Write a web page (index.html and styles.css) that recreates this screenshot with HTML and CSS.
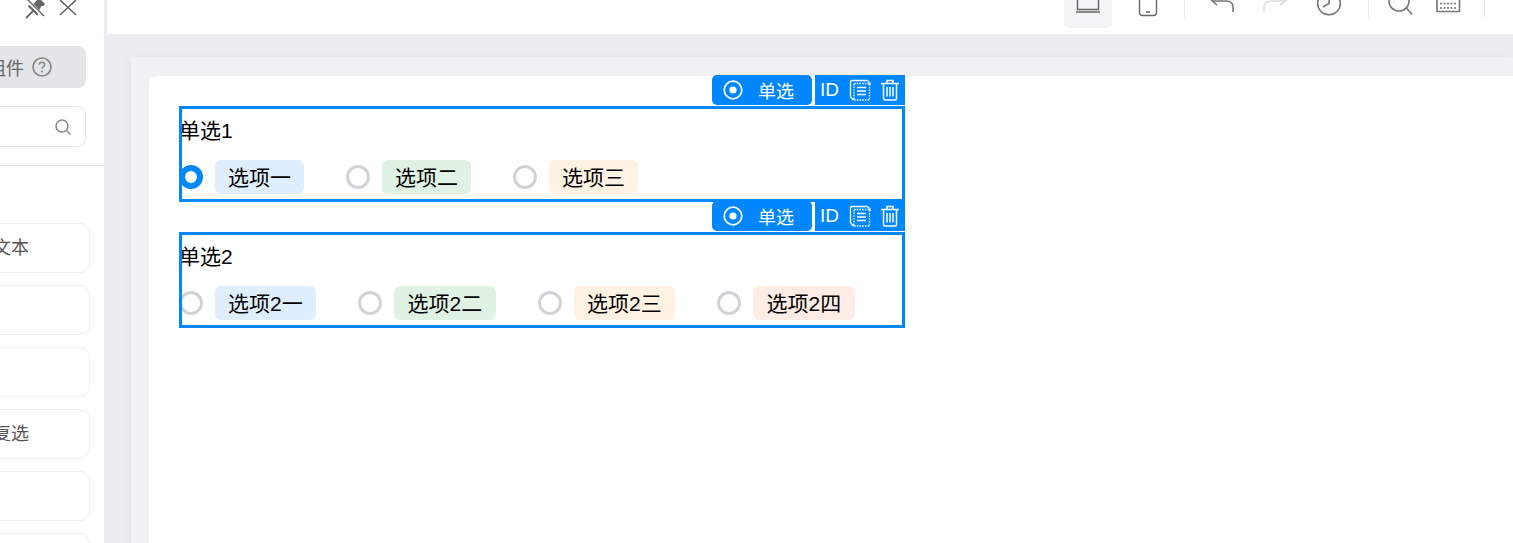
FILE: index.html
```html
<!DOCTYPE html>
<html lang="zh-CN">
<head>
    <meta charset="utf-8" />
    <title>表单设计</title>
    <link rel="stylesheet" href="styles.css">
</head>
<body>
    <div class="page">
        <div class="sidebar">
            <div class="side-head">
                <svg class="pin" width="22" height="21" viewBox="0 0 22 21"><path d="M13 2l3-1 5 5-1.500 2-2 0-3 5.500 0 3-1.500 1-9-9 1-1.500 3.500 0z" fill="#666"/><path d="M2 20l8-8" stroke="#666" stroke-width="1.800"/><path d="M2 1l18 18" stroke="#fff" stroke-width="3.500"/><path d="M3 1l17 17" stroke="#666" stroke-width="1.400"/></svg>
                <svg class="close" width="18" height="16" viewBox="0 0 18 16"><path d="M1 0l16 15M17 0L1 15" stroke="#666" stroke-width="1.600" fill="none"/></svg>
            </div>
            <div class="side-btn">
                <span>组件</span>
                <svg width="20" height="20" viewBox="0 0 20 20"><circle cx="10" cy="10" r="9" fill="none" stroke="#888" stroke-width="1.700"/><path d="M7.300 7.800c0-3.400 5.400-3.400 5.400 0 0 2-2.700 2-2.700 4" fill="none" stroke="#888" stroke-width="1.600"/><circle cx="10" cy="14.400" r="1" fill="#888"/></svg>
            </div>
            <div class="side-search">
                <svg width="18" height="18" viewBox="0 0 18 18"><circle cx="8" cy="8" r="6" fill="none" stroke="#888" stroke-width="1.500"/><path d="M12.500 12.500l4 4" stroke="#888" stroke-width="1.500"/></svg>
            </div>
            <div class="side-line"></div>
            <div class="side-item">文本</div>
            <div class="side-item"></div>
            <div class="side-item"></div>
            <div class="side-item">复选</div>
            <div class="side-item"></div>
            <div class="side-item"></div>
        </div>
        <div class="main">
            <div class="toolbar">
                <div class="tool active">
                    <svg width="28" height="28" viewBox="0 0 28 28"><path d="M3.500 0v9.500h21V0M2 12h24" fill="none" stroke="#666" stroke-width="1.400"/></svg>
                </div>
                <div class="tool next">
                    <svg width="28" height="28" viewBox="0 0 28 28"><path d="M5.500 0v12.500q0 3 3 3h11q3 0 3-3V0M12 12h4" fill="none" stroke="#666" stroke-width="1.400"/></svg>
                </div>
                <div class="divider"></div>
                <div class="tool undo">
                    <svg width="28" height="28" viewBox="0 0 28 28"><path d="M3 0l6 5M4 1h14q7 0 7 6v5" fill="none" stroke="#777" stroke-width="1.600"/></svg>
                </div>
                <div class="tool redo">
                    <svg width="28" height="28" viewBox="0 0 28 28"><path d="M26 0l-7 5M24 1H10q-7 0-7 6v5" fill="none" stroke="#ddd" stroke-width="1.600"/></svg>
                </div>
                <div class="tool clock">
                    <svg width="28" height="28" viewBox="0 0 28 28"><circle cx="14" cy="3.500" r="11.300" fill="none" stroke="#777" stroke-width="1.600"/><path d="M14 0v3.500L8 7" fill="none" stroke="#777" stroke-width="1.600"/></svg>
                </div>
                <div class="divider wide"></div>
                <div class="tool find">
                    <svg width="28" height="28" viewBox="0 0 28 28"><circle cx="13" cy="1" r="10" fill="none" stroke="#777" stroke-width="1.600"/><path d="M20.500 8l5.500 6.500" stroke="#777" stroke-width="1.600"/></svg>
                </div>
                <div class="tool">
                    <svg width="28" height="28" viewBox="0 0 28 28"><path d="M3 0v11.500h22.500V0" fill="none" stroke="#777" stroke-width="1.600"/><path d="M6 3.500h17M6 8h17" stroke="#777" stroke-width="1.500" stroke-dasharray="2 1.500"/></svg>
                </div>
                <div class="divider"></div>
            </div>
            <div class="canvas">
                <div class="sheet">
                    <div class="field">
                        <div class="field-tag">
                            <svg width="20" height="20" viewBox="0 0 20 20"><circle cx="10" cy="10" r="8.800" fill="none" stroke="#fff" stroke-width="1.700"/><circle cx="10" cy="10" r="3.600" fill="#fff"/></svg>
                            <span>单选</span>
                        </div>
                        <div class="field-actions">
                            <span>ID</span>
                            <svg width="22" height="22" viewBox="0 0 22 22"><path d="M1.500 18V3q0-1.500 1.500-1.500h15.500" fill="none" stroke="#fff" stroke-width="1.300"/><path d="M1.500 18l2.500 2.500h1M18.500 1.500L21 4v2" fill="none" stroke="#fff" stroke-width="1.300"/><path d="M5 4.500h15.500v16.500H5z" fill="none" stroke="#fff" stroke-width="1.300" stroke-dasharray="1.500 1.200"/><path d="M8 8.500h9M8 12h9M8 15.500h9" stroke="#fff" stroke-width="1.300"/></svg>
                            <svg width="20" height="22" viewBox="0 0 20 22"><path d="M1 4.500h18M7 4V1.500h6V4M3.500 5v14.500q0 1.500 1.500 1.500h10q1.500 0 1.500-1.500V5" fill="none" stroke="#fff" stroke-width="1.500"/><path d="M7 8v9.500M10 8v9.500M13 8v9.500" stroke="#fff" stroke-width="1.500"/></svg>
                        </div>
                        <div class="field-label">单选1</div>
                        <div class="options">
                            <div class="option"><span class="radio checked"></span><span class="pill blue">选项一</span></div>
                            <div class="option"><span class="radio"></span><span class="pill green">选项二</span></div>
                            <div class="option"><span class="radio"></span><span class="pill orange">选项三</span></div>
                        </div>
                    </div>
                    <div class="field">
                        <div class="field-tag">
                            <svg width="20" height="20" viewBox="0 0 20 20"><circle cx="10" cy="10" r="8.800" fill="none" stroke="#fff" stroke-width="1.700"/><circle cx="10" cy="10" r="3.600" fill="#fff"/></svg>
                            <span>单选</span>
                        </div>
                        <div class="field-actions">
                            <span>ID</span>
                            <svg width="22" height="22" viewBox="0 0 22 22"><path d="M1.500 18V3q0-1.500 1.500-1.500h15.500" fill="none" stroke="#fff" stroke-width="1.300"/><path d="M1.500 18l2.500 2.500h1M18.500 1.500L21 4v2" fill="none" stroke="#fff" stroke-width="1.300"/><path d="M5 4.500h15.500v16.500H5z" fill="none" stroke="#fff" stroke-width="1.300" stroke-dasharray="1.500 1.200"/><path d="M8 8.500h9M8 12h9M8 15.500h9" stroke="#fff" stroke-width="1.300"/></svg>
                            <svg width="20" height="22" viewBox="0 0 20 22"><path d="M1 4.500h18M7 4V1.500h6V4M3.500 5v14.500q0 1.500 1.500 1.500h10q1.500 0 1.500-1.500V5" fill="none" stroke="#fff" stroke-width="1.500"/><path d="M7 8v9.500M10 8v9.500M13 8v9.500" stroke="#fff" stroke-width="1.500"/></svg>
                        </div>
                        <div class="field-label">单选2</div>
                        <div class="options long">
                            <div class="option"><span class="radio"></span><span class="pill blue">选项2一</span></div>
                            <div class="option"><span class="radio"></span><span class="pill green">选项2二</span></div>
                            <div class="option"><span class="radio"></span><span class="pill orange">选项2三</span></div>
                            <div class="option"><span class="radio"></span><span class="pill red">选项2四</span></div>
                        </div>
                    </div>
                </div>
            </div>
        </div>
    </div>
</body>
</html>
```

FILE: styles.css
```css
* {
    box-sizing: border-box;
}

body {
    margin: 0;
    font-family: "Liberation Sans", "Noto Sans CJK SC", sans-serif;
    color: #000;
}

.page {
    display: flex;
    height: 543px;
    overflow: hidden;
    background-color: #ecedf1;
}

/* left panel, its content runs past the window edge */
.sidebar {
    flex: 0 0 104px;
    display: flex;
    flex-direction: column;
    align-items: flex-end;
    background-color: #fff;
    overflow: hidden;
}

.side-head {
    display: flex;
    flex: none;
    align-items: flex-start;
    gap: 13px;
    height: 48px;
    padding-right: 27px;
    margin-top: -2px;
}

.side-head .close {
    margin-top: 2px;
}

.side-btn {
    display: flex;
    align-items: center;
    justify-content: flex-end;
    gap: 8px;
    flex: 0 0 42px;
    width: 160px;
    margin-right: 18px;
    padding-right: 34px;
    border-radius: 8px;
    background-color: #e4e5e7;
    color: #666;
    font-size: 18px;
}

.side-search {
    display: flex;
    align-items: center;
    justify-content: flex-end;
    flex: 0 0 41px;
    width: 160px;
    margin: 18px 18px 0 0;
    padding-right: 13px;
    border: 1px solid #e8e9eb;
    border-radius: 8px;
}

.side-line {
    flex: 0 0 1px;
    width: 160px;
    margin: 18px 0 57px;
    background-color: #e8e9eb;
}

.side-item {
    flex: 0 0 50px;
    width: 160px;
    margin: 0 14px 12px 0;
    padding-right: 60px;
    border: 1px solid #eeeff1;
    border-radius: 10px;
    color: #555;
    font-size: 18px;
    line-height: 48px;
    text-align: right;
}

.main {
    flex: 1;
    min-width: 0;
}

.toolbar {
    display: flex;
    align-items: flex-start;
    height: 34px;
    margin-left: 3px;
    padding-left: 957px;
    background-color: #fff;
}

.tool {
    display: flex;
    justify-content: center;
    flex: 0 0 48px;
    height: 28px;
}

.tool.active {
    border-radius: 0 0 5px 5px;
    background-color: #f3f4f5;
}

.tool.next {
    margin-left: 12px;
}

.tool.undo {
    margin-left: 13px;
}

.tool.redo {
    margin-left: 5px;
}

.tool.clock {
    margin-left: 6px;
}

.tool.find {
    margin-left: 7px;
}

.divider {
    flex: 0 0 1px;
    height: 19px;
    margin-left: 12px;
    background-color: #ebebeb;
}

.divider.wide {
    margin-left: 15px;
}

.canvas {
    height: 600px;
    margin: 23px 0 0 27px;
    padding: 19px 0 0 18px;
    background-color: #f0f1f3;
    box-shadow: -3px 0 6px rgba(0, 0, 0, 0.03);
}

.sheet {
    height: 100%;
    padding: 30px 0 0 30px;
    border-radius: 8px 0 0 0;
    background-color: #fff;
}

.field {
    position: relative;
    width: 726px;
    height: 96px;
    margin-bottom: 30px;
}

/* selection frame sits on top of the radios */
.field::after {
    content: "";
    position: absolute;
    top: 0;
    right: 0;
    bottom: 0;
    left: 0;
    border: 3px solid #0086ff;
    pointer-events: none;
}

.field-tag {
    position: absolute;
    top: -31px;
    right: 93px;
    display: flex;
    align-items: center;
    width: 100px;
    height: 30px;
    padding-left: 11px;
    border-radius: 5px;
    background-color: #0086ff;
    color: #fff;
    font-size: 18px;
}

.field-tag span {
    margin-left: 15px;
}

.field-actions {
    position: absolute;
    top: -31px;
    right: 0;
    display: flex;
    align-items: center;
    width: 90px;
    height: 30px;
    padding-left: 5px;
    background-color: #0086ff;
    color: #fff;
    font-size: 19px;
}

.field-actions svg {
    margin-left: 10px;
}

.field-actions svg:last-child {
    margin-left: 9px;
}

.field-label {
    display: flex;
    align-items: center;
    height: 46px;
    margin-bottom: 8px;
    font-size: 21px;
}

.options {
    display: flex;
}

.option {
    display: flex;
    align-items: center;
    gap: 12px;
    margin-right: 42px;
}

.radio {
    width: 24px;
    height: 24px;
    border: 3px solid #d0d3d6;
    border-radius: 50%;
    background-color: #fff;
}

.radio.checked {
    border: 6.5px solid #0086ff;
}

.pill {
    height: 34px;
    padding: 0 13px;
    border-radius: 6px;
    font-size: 21px;
    line-height: 36px;
    white-space: nowrap;
}

.long .pill {
    padding-right: 13.8px;
}

.pill.blue {
    background-color: #e0effe;
}

.pill.green {
    background-color: #dff2e4;
}

.pill.orange {
    background-color: #fef2e3;
}

.pill.red {
    background-color: #ffece6;
}
```
